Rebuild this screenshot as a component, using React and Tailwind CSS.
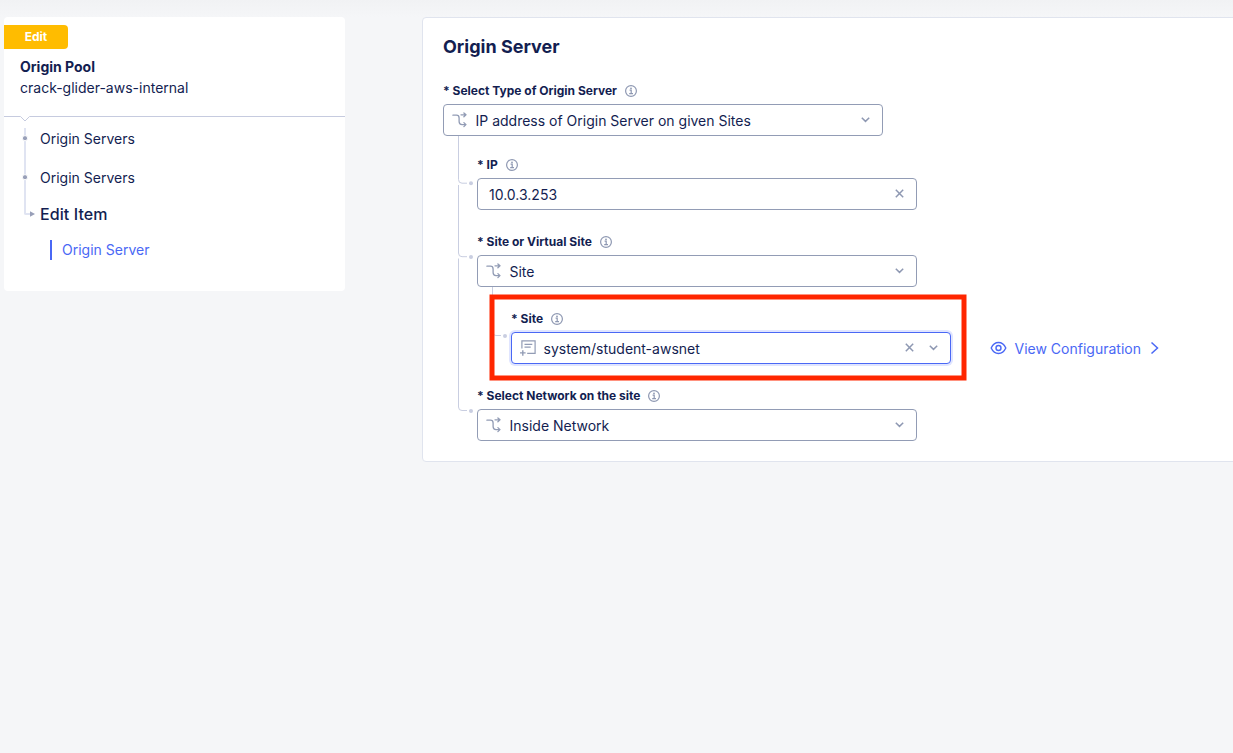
import React from "react";

function InfoIcon() {
  return (
    <svg width="12" height="12" viewBox="0 0 12 12" fill="none" stroke="#8e98b2" className="shrink-0">
      <circle cx="6" cy="6" r="5.4" strokeWidth="1.2" />
      <path d="M4.6 5.2H6.2V8.6M4.2 8.7H8" strokeWidth="1.2" />
      <circle cx="6" cy="3.3" r="0.9" fill="#8e98b2" stroke="none" />
    </svg>
  );
}

function BranchIcon() {
  return (
    <svg width="16" height="16" viewBox="0 0 16 16" fill="none" stroke="#929cb5" strokeWidth="1.3" strokeLinecap="round" strokeLinejoin="round" className="shrink-0">
      <path d="M9 2.8H14M11.900 0.900L14 2.800L11.900 4.700" />
      <path d="M0.900 3.200H4.500C6.600 3.200 7.100 4.300 7.100 6V9.600C7.100 11.700 7.900 12.600 10 12.600H14M11.900 10.600L14 12.600L11.900 14.600" />
    </svg>
  );
}

function ListAddIcon() {
  return (
    <svg width="16" height="16" viewBox="0 0 16 16" fill="none" stroke="#929cb5" strokeWidth="1.2" className="shrink-0">
      <path d="M1.9 8.6V0.9H15.1V13.3H7.2" />
      <path d="M4.5 4.3H12.3M4.5 7.1H10.7" />
      <path d="M0 12.9H5.6M2.8 10.2V15.8" strokeWidth="1.4" />
    </svg>
  );
}

function Chevron() {
  return (
    <svg width="9" height="6" viewBox="0 0 9 6" fill="none" stroke="#8e98b2" strokeWidth="1.5" className="shrink-0">
      <path d="M0.8 0.8L4.5 4.4L8.2 0.8" />
    </svg>
  );
}

function Clear() {
  return (
    <svg width="9" height="9" viewBox="0 0 9 9" fill="none" stroke="#8e98b2" strokeWidth="1.5" className="mb-px shrink-0">
      <path d="M0.8 0.8L8.2 8.2M8.2 0.8L0.8 8.2" />
    </svg>
  );
}

function Field({ label, value, icon, clear, chevron, focused, className = "" }) {
  return (
    <div className={`w-[440px] ${className}`}>
      <div className="flex h-[26px] items-center gap-2 text-[12px] font-bold leading-4">
        <span className="whitespace-nowrap">* {label}</span>
        <InfoIcon />
      </div>
      <div
        className={`flex h-8 items-center rounded-[4px] border bg-white pr-3 ${
          icon ? "pl-2" : "pl-[11px]"
        } ${focused ? "border-[#4a68f5] shadow-[0_0_0_2px_#e0e5ff]" : "border-[#929cb5]"}`}
      >
        {icon}
        <span className={`grow whitespace-nowrap pt-[2px] text-[14px] leading-5 ${icon ? "pl-[7.5px]" : ""}`}>{value}</span>
        <span className="flex items-center gap-[15px]">
          {clear && <Clear />}
          {chevron && <Chevron />}
        </span>
      </div>
    </div>
  );
}

function Sidebar() {
  return (
    <aside className="relative h-[274px] w-[341px] shrink-0 rounded-[4px] bg-white">
      <div className="flex h-[99px] flex-col items-start pt-2">
        <div className="flex h-6 w-16 items-center justify-center rounded-r-[4px] bg-[#ffbc00] text-[12px] font-bold text-white">Edit</div>
        <div className="mt-[7px] pl-4 text-[14px] font-bold leading-[21px]">Origin Pool</div>
        <div className="pl-4 text-[14px] leading-[21px]">crack-glider-aws-internal</div>
      </div>
      <nav className="flex flex-col pl-9 text-[14px]">
        <a className="mt-[13px] leading-5">Origin Servers</a>
        <a className="mt-[19px] leading-5">Origin Servers</a>
        <a className="mt-[14px] text-[16px] font-medium leading-6 tracking-[0.1px]">Edit Item</a>
        <a className="ml-[10px] mt-[14px] border-l-2 border-[#4a68f5] pl-[10px] leading-5 text-[#4a68f5]">Origin Server</a>
      </nav>
      <svg width="341" height="110" viewBox="0 0 341 110" fill="none" className="pointer-events-none absolute left-0 top-[95px]">
        <path d="M0 4.5H16.5L21 9L25.5 4.5H341" stroke="#c6cbdf" />
        <path d="M21 16V101.5Q21 102 22 102H27" stroke="#e0e4f2" strokeWidth="2" />
        <circle cx="21" cy="26.2" r="2.6" fill="#989fb8" stroke="#fff" />
        <circle cx="21" cy="65.2" r="2.6" fill="#989fb8" stroke="#fff" />
        <path d="M26 99.3L31 102L26 104.7Z" fill="#989fb8" />
      </svg>
    </aside>
  );
}

function Connectors() {
  return (
    <svg width="90" height="290" viewBox="0 0 90 290" fill="none" stroke="#c9cee1" className="pointer-events-none absolute left-[30px] top-[118px]">
      <path d="M5.5 0V43.5Q5.5 47.2 9 47.2H14" />
      <path d="M5.5 49V117Q5.5 120.700 9 120.700H14" />
      <path d="M5.5 122.500V271Q5.500 274.500 9 274.500H14" />
      <path d="M39.5 151V196Q39.5 199.5 43 199.5H48" />
      <g fill="#c9cee1" stroke="none">
        <circle cx="18" cy="47.2" r="2" />
        <circle cx="18" cy="121" r="2" />
        <circle cx="18" cy="275" r="2" />
        <circle cx="52" cy="200" r="2" />
      </g>
    </svg>
  );
}

export default function App() {
  return (
    <div className="h-[753px] overflow-hidden bg-[#f5f6f8] font-['Inter',sans-serif] text-[#131e51]">
      <div className="h-[17px] bg-linear-to-b from-[#f1f2f4] to-[#f5f6f8]" />
      <div className="flex items-start pl-1">
        <Sidebar />
        <main className="relative ml-[77px] h-[445px] w-[830px] shrink-0 rounded-[4px] border border-[#e0e4ee] bg-white pl-5 pt-[15px]">
          <h1 className="text-[18px] font-bold leading-7">Origin Server</h1>
          <Field className="mt-[17px]" label="Select Type of Origin Server" value="IP address of Origin Server on given Sites" icon={<BranchIcon />} chevron />
          <div className="pl-[34px]">
            <Field className="mt-4" label="IP" value="10.0.3.253" clear />
            <Field className="mt-[19px]" label="Site or Virtual Site" value="Site" icon={<BranchIcon />} chevron />
            <div className="mt-[19px] flex items-end pl-[34px]">
              <Field label="Site" value="system/student-awsnet" icon={<ListAddIcon />} clear chevron focused />
              <a className="ml-[39px] flex h-8 items-center text-[14px] text-[#4a68f5]">
                <svg width="17" height="14" viewBox="0 0 17 14" fill="none" stroke="currentColor" strokeWidth="1.4">
                  <path d="M1.200 7C2.800 3.500 5.300 1.500 8.500 1.500S14.200 3.500 15.800 7C14.200 10.500 11.700 12.500 8.500 12.500S2.800 10.500 1.200 7Z" />
                  <circle cx="8.500" cy="7" r="2.500" />
                </svg>
                <span className="ml-[7.5px] whitespace-nowrap">View Configuration</span>
                <svg width="9" height="14" viewBox="0 0 9 14" fill="none" stroke="currentColor" strokeWidth="1.5" className="ml-[9px]">
                  <path d="M1.500 1.500L7.500 7L1.500 12.500" />
                </svg>
              </a>
            </div>
            <Field className="mt-[19px]" label="Select Network on the site" value="Inside Network" icon={<BranchIcon />} chevron />
          </div>
          <Connectors />
          <svg width="480" height="88" viewBox="0 0 480 88" fill="none" className="pointer-events-none absolute left-[66px] top-[276px]">
            <rect x="3" y="3" width="472" height="81" stroke="#ff2600" strokeWidth="5" />
          </svg>
        </main>
      </div>
    </div>
  );
}
